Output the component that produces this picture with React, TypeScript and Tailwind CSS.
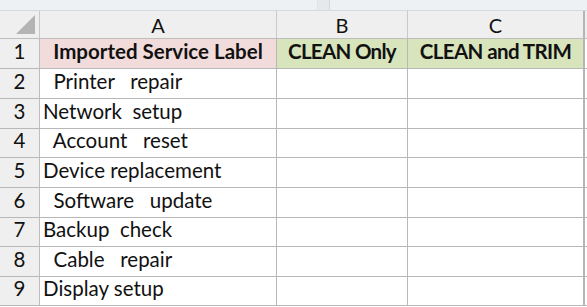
import React from "react";

const rows = [
  "  Printer   repair",
  "Network  setup",
  "  Account   reset",
  "Device replacement",
  "  Software   update",
  "Backup  check",
  "  Cable   repair",
  "Display setup",
];

const heights = ["h-[30px]", "h-[30px]", "h-[29px]", "h-[30px]", "h-[30px]", "h-[29px]", "h-[30px]", "h-[29px]"];

const App = () => {
  return (
    <div className="w-[587px] h-[307px] overflow-hidden bg-white text-[#111] font-['Lato','Liberation_Sans',sans-serif]">
      <div className="h-[11px] flex bg-[#eef1f4] border-b border-[#d6d9dc]">
        <div className="w-[318px] border-r border-[#dfe3e7]" />
        <div className="w-[12px] bg-[#e6e9ec] border-r border-[#d6d9dc]" />
        <div className="flex-1" />
      </div>
      <div className="h-[28px] flex bg-[#efefef] border-b border-[#bdbdbd] text-[20px]">
        <div className="w-[40px] border-r border-[#c9c9c9] relative">
          <svg className="absolute left-[16px] top-[4px]" width="19" height="19" viewBox="0 0 19 19">
            <polygon points="19,0 19,19 0,19" fill="#b4b4b4" />
          </svg>
        </div>
        <div className="w-[237px] border-r border-[#c9c9c9] flex items-center justify-center">A</div>
        <div className="w-[131px] border-r border-[#c9c9c9] flex items-center justify-center">B</div>
        <div className="w-[177px] border-r-2 border-[#b5b5b5] flex items-center justify-center">C</div>
        <div className="flex-1" />
      </div>
      <div className="h-[30px] flex border-b border-[#b8b8b8] text-[20.5px] font-bold">
        <div className="w-[40px] bg-[#efefef] border-r border-[#bdbdbd] flex items-end justify-center pb-[1px] font-normal">1</div>
        <div className="w-[237px] bg-[#f2dcdb] border-r border-[#b8b8b8] flex items-end justify-center pb-[1px]">Imported Service Label</div>
        <div className="w-[131px] bg-[#d8e4bc] border-r border-[#b8b8b8] flex items-end justify-center pb-[1px] tracking-[-0.7px]">CLEAN Only</div>
        <div className="w-[177px] bg-[#d8e4bc] border-r-2 border-[#b5b5b5] flex items-end justify-center pb-[1px] tracking-[-0.6px]">CLEAN and TRIM</div>
        <div className="flex-1" />
      </div>
      {rows.map((label, i) => (
        <div key={i} className={`${heights[i]} flex border-b border-[#b8b8b8] text-[20.5px]`}>
          <div className="w-[40px] bg-[#efefef] border-r border-[#bdbdbd] flex items-end justify-center pb-[1px]">{i + 2}</div>
          <div className="w-[237px] border-r border-[#b8b8b8] flex items-end pl-[3px] pb-[1px] whitespace-pre">{label}</div>
          <div className="w-[131px] border-r border-[#b8b8b8]" />
          <div className="w-[177px] border-r-2 border-[#b5b5b5]" />
          <div className="flex-1" />
        </div>
      ))}
    </div>
  );
};

export default App;
